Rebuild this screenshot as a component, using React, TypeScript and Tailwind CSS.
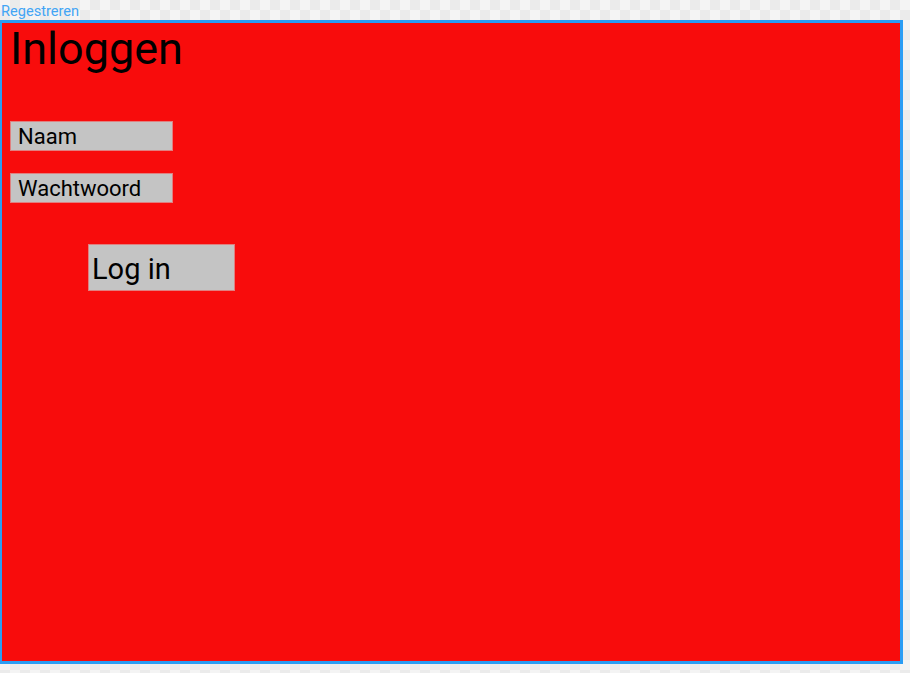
export default function App() {
  return (
    <div
      className="w-[910px] h-[673px] overflow-hidden bg-[repeating-conic-gradient(#ebebeb_0_25%,#f4f4f4_0_50%)] bg-[length:20px_20px] font-['Roboto',sans-serif]"
    >
      {/* top link */}
      <div className="h-[20px] pl-[1px] pt-[3px] text-[14.6px] leading-[16px] text-[#42a5f5]">Regestreren</div>

      {/* login panel */}
      <div className="w-[903px] h-[644px] bg-[#f80c0c] border-[3px] border-l-2 border-[#2a9df4] flex flex-col">
        <h1 className="ml-[8px] mt-[1px] text-[45px] leading-[50px] text-black">Inloggen</h1>

        <div className="mt-[47px] ml-[8px] flex flex-col gap-[22px]">
          <input
            className="w-[163px] h-[30px] bg-[#c4c4c4] border border-[#e08080] px-[7px] text-[22px] leading-[28px] text-black placeholder:text-black outline-none"
            placeholder="Naam"
          />
          <input
            type="password"
            className="w-[163px] h-[30px] bg-[#c4c4c4] border border-[#e08080] px-[7px] text-[22px] leading-[28px] text-black placeholder:text-black outline-none"
            placeholder="Wachtwoord"
          />
        </div>

        <button className="ml-[86px] mt-[41px] w-[147px] h-[47px] bg-[#c4c4c4] border border-[#e08080] pl-[3px] pt-[3px] text-left text-[29px] leading-[40px] text-black">
          Log in
        </button>
      </div>
    </div>
  )
}
